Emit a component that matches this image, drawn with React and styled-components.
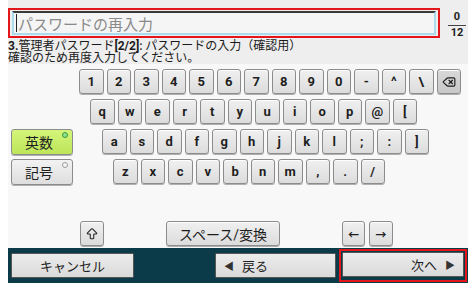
import React from "react";
import styled, { createGlobalStyle } from "styled-components";
import { Delete, ArrowBigUp } from "lucide-react";

const GlobalStyle = createGlobalStyle`
  html, body {
    margin: 0;
    padding: 0;
    background: #ffffff;
  }
  body {
    font-family: "Roboto", "Noto Sans CJK JP", sans-serif;
  }
`;

const Screen = styled.div`
  margin-left: 8px;
  width: 460px;
  height: 283px;
  display: flex;
  flex-direction: column;
  background: #f2f2f2;
`;

const Header = styled.header`
  height: 64px;
  display: flex;
  flex-direction: column;
  background: #eeeeee;
`;

const InputRow = styled.div`
  display: flex;
  align-items: flex-start;
  padding-top: 8px;
  height: 30px;
`;

const FocusFrame = styled.div`
  width: 432px;
  height: 30px;
  box-sizing: border-box;
  border: 2px solid #e2161b;
  padding: 1px 2px;
`;

const Field = styled.div`
  height: 100%;
  box-sizing: border-box;
  background: #f5f5f5;
  border: 2px solid #a9dced;
  border-top: 2px solid #3a3a3a;
  display: flex;
  align-items: center;
  padding-left: 2px;
  font-family: "Noto Sans CJK JP", sans-serif;
  font-size: 15px;
  color: #8a8a8a;
`;

const Caret = styled.span`
  width: 1px;
  height: 18px;
  background: #222;
  margin-right: 1px;
`;

const Counter = styled.div`
  margin-left: 8px;
  width: 18px;
  display: flex;
  flex-direction: column;
  align-items: center;
  font-family: "Roboto", sans-serif;
  font-weight: 700;
  font-size: 11px;
  line-height: 12px;
  color: #222;
  padding-top: 3px;
`;

const CounterLine = styled.span`
  width: 18px;
  height: 1px;
  background: #444;
  margin: 2px 0 1px;
`;

const Message = styled.div`
  display: flex;
  flex-direction: column;
  font-family: "Noto Sans CJK JP", sans-serif;
  font-size: 12px;
  color: #1a1a1a;
  padding-top: 1px;
  white-space: nowrap;
  b {
    font-family: "Roboto", sans-serif;
    font-weight: 700;
  }
`;

const MessageLine = styled.span`
  display: block;
  height: 12px;
  line-height: 12px;
  overflow: visible;
`;

const Keyboard = styled.section`
  flex: 1;
  background: #f8f8f8;
  display: flex;
  flex-direction: column;
  padding-top: 5px;
`;

const Row = styled.div`
  display: flex;
  align-items: center;
  height: 25px;
  margin-bottom: 5px;
  padding-left: ${(p) => p.$pad}px;
`;

const Keys = styled.div`
  display: flex;
  gap: 3px;
  margin-left: ${(p) => p.$indent || 0}px;
`;

const Key = styled.button`
  width: ${(p) => p.$w || 24.5}px;
  height: 25px;
  box-sizing: border-box;
  padding: 0;
  border: 1px solid #8c8c8c;
  border-radius: 3px;
  background: ${(p) =>
    p.$dark
      ? "linear-gradient(#d8d8d8, #c8c8c8)"
      : "linear-gradient(#f0f0f0, #dcdcdc)"};
  box-shadow: inset 0 1px 0 #ffffff, 0 1px 0 #b0b0b0;
  font-family: "Roboto", "Noto Sans CJK JP", sans-serif;
  font-weight: ${(p) => (p.$light ? 400 : 700)};
  font-size: ${(p) => p.$fs || 13}px;
  color: #1e1e1e;
  display: flex;
  align-items: center;
  justify-content: center;
`;

const ModeButton = styled.button`
  position: relative;
  width: 62px;
  height: 26px;
  box-sizing: border-box;
  padding: 0 6px 0 0;
  border: 1px solid #8c8c8c;
  border-radius: 3px;
  background: ${(p) =>
    p.$active ? "linear-gradient(#d4f57a, #bde55a)" : "linear-gradient(#f2f2f2, #dedede)"};
  box-shadow: 0 1px 0 #b0b0b0;
  font-family: "Noto Sans CJK JP", sans-serif;
  font-size: 14px;
  color: #1e1e1e;
`;

const Dot = styled.span`
  position: absolute;
  top: 2px;
  right: 4px;
  width: 4px;
  height: 4px;
  border-radius: 50%;
  border: 1px solid ${(p) => (p.$on ? "#3a9a3a" : "#9a9a9a")};
  background: ${(p) => (p.$on ? "#8ee08e" : "#f4f4f4")};
`;

const Spacer = styled.div`
  flex: 1;
`;

const BottomRow = styled.div`
  display: flex;
  align-items: center;
  height: 25px;
  margin-bottom: 2px;
  padding-left: 72px;
  gap: 62px;
`;

const ArrowPair = styled.div`
  display: flex;
  gap: 4px;
`;

const ActionBar = styled.footer`
  height: 35px;
  background: #0b3a48;
  display: flex;
  align-items: center;
  padding: 0 0 0 3px;
`;

const BarButton = styled.button`
  width: ${(p) => p.$w}px;
  height: 25px;
  box-sizing: border-box;
  border: 1px solid #555;
  border-radius: 1px;
  background: linear-gradient(#ececec, #dadada);
  font-family: "Noto Sans CJK JP", sans-serif;
  font-size: 13px;
  color: #1e1e1e;
  display: flex;
  align-items: center;
  justify-content: ${(p) => p.$justify || "center"};
  padding: 0 8px;
  gap: 8px;
  margin-left: ${(p) => p.$ml || 0}px;
`;

const NextFrame = styled.div`
  margin-left: 3px;
  height: 33px;
  box-sizing: border-box;
  border: 2px solid #e2161b;
  padding: 1px;
  display: flex;
`;

const Tri = styled.span`
  font-size: 10px;
  color: #333;
`;

const row1 = ["1", "2", "3", "4", "5", "6", "7", "8", "9", "0", "-", "^", "\\"];
const row2 = ["q", "w", "e", "r", "t", "y", "u", "i", "o", "p", "@", "["];
const row3 = ["a", "s", "d", "f", "g", "h", "j", "k", "l", ";", ":", "]"];
const row4 = ["z", "x", "c", "v", "b", "n", "m", ",", ".", "/"];

const App = () => {
  return (
    <>
      <GlobalStyle />
      <Screen>
        <Header>
          <InputRow>
            <FocusFrame>
              <Field>
                <Caret />
                パスワードの再入力
              </Field>
            </FocusFrame>
            <Counter>
              <span>0</span>
              <CounterLine />
              <span>12</span>
            </Counter>
          </InputRow>
          <Message>
            <MessageLine>
              <b>3.</b>管理者パスワード<b>[2/2]</b>: パスワードの入力（確認用）
            </MessageLine>
            <MessageLine>確認のため再度入力してください。</MessageLine>
          </Message>
        </Header>
        <Keyboard>
          <Row $pad={71}>
            <Keys>
              {row1.map((k) => (
                <Key key={k}>{k}</Key>
              ))}
              <Key $dark>
                <Delete size={14} strokeWidth={2} />
              </Key>
            </Keys>
          </Row>
          <Row $pad={82}>
            <Keys>
              {row2.map((k) => (
                <Key key={k}>{k}</Key>
              ))}
            </Keys>
          </Row>
          <Row $pad={3}>
            <ModeButton $active>
              英数
              <Dot $on />
            </ModeButton>
            <Keys $indent={29}>
              {row3.map((k) => (
                <Key key={k}>{k}</Key>
              ))}
            </Keys>
          </Row>
          <Row $pad={3}>
            <ModeButton>
              記号
              <Dot />
            </ModeButton>
            <Keys $indent={40}>
              {row4.map((k) => (
                <Key key={k}>{k}</Key>
              ))}
            </Keys>
          </Row>
          <Spacer />
          <BottomRow>
            <Key $w={24}>
              <ArrowBigUp size={14} strokeWidth={1.8} />
            </Key>
            <Key $w={114} $light $fs={14}>
              スペース/変換
            </Key>
            <ArrowPair>
              <Key $w={23} $fs={11}>←</Key>
              <Key $w={24} $fs={11}>→</Key>
            </ArrowPair>
          </BottomRow>
        </Keyboard>
        <ActionBar>
          <BarButton $w={123}>キャンセル</BarButton>
          <BarButton $w={121} $ml={81} $justify="flex-start">
            <Tri>◀</Tri>戻る
          </BarButton>
          <NextFrame>
            <BarButton $w={122} $justify="flex-end">
              次へ<Tri>▶</Tri>
            </BarButton>
          </NextFrame>
        </ActionBar>
      </Screen>
    </>
  );
};

export default App;
